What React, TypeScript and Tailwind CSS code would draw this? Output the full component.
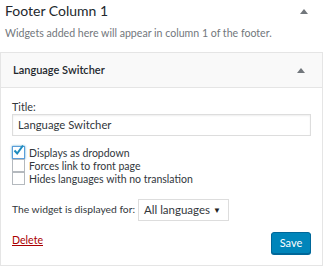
const font = { fontFamily: 'Lato, "Open Sans", sans-serif' };

function Caret() {
  return (
    <svg width="8" height="5" viewBox="0 0 8 5" className="shrink-0">
      <path d="M0 5 L4 0 L8 5 Z" fill="#72777c" />
    </svg>
  );
}

function Check({ checked, label }: { checked?: boolean; label: string }) {
  return (
    <label className="flex h-[13px] items-center gap-[4px]">
      <span
        className={
          "relative flex h-[13px] w-[13px] shrink-0 items-center justify-center border bg-white " +
          (checked ? "border-[#5b9dd9] shadow-[0_0_2px_rgba(30,140,190,0.8)]" : "border-[#b4b9be]")
        }
      >
        {checked && (
          <svg width="13" height="13" viewBox="0 0 13 13" className="absolute -left-[1px] -top-[3px]">
            <path d="M2.5 6.5 L5.2 9.5 L11 1.5" stroke="#1e8cbe" strokeWidth="2" fill="none" />
          </svg>
        )}
      </span>
      <span className="whitespace-nowrap text-[10.5px] leading-[12px] text-[#32373c]">{label}</span>
    </label>
  );
}

export default function App() {
  return (
    <div className="h-[274px] w-[326px] bg-white" style={font}>
      <div className="flex h-[22px] items-center justify-between pl-[5px] pr-[18px]">
        <h2 className="text-[14px] leading-[18px] text-[#23282d]">Footer Column 1</h2>
        <Caret />
      </div>
      <p className="mt-[4px] whitespace-nowrap pl-[5px] text-[10.6px] leading-[14px] text-[#72777c]">
        Widgets added here will appear in column 1 of the footer.
      </p>
      <div className="mt-[12px] w-[323px] border border-[#e5e5e5] bg-white">
        <div className="flex h-[35px] items-center justify-between border-b border-[#e5e5e5] bg-[#f9f9f9] pl-[12px] pr-[17px]">
          <span className="text-[11px] font-semibold text-[#23282d]">Language Switcher</span>
          <Caret />
        </div>
        <div className="px-[11px] pb-[11px] pt-[12px]">
          <div className="text-[10.8px] leading-[14px] text-[#32373c]">Title:</div>
          <div className="flex h-[22px] w-[299px] items-center border border-[#ddd] px-[5px] text-[11.3px] text-[#32373c] shadow-[inset_0_1px_2px_rgba(0,0,0,0.07)]">
            Language Switcher
          </div>
          <div className="mt-[10px] flex flex-col">
            <Check checked label="Displays as dropdown" />
            <Check label="Forces link to front page" />
            <Check label="Hides languages with no translation" />
          </div>
          <div className="mt-[14px] flex items-center gap-[3px]">
            <span className="whitespace-nowrap text-[10.3px] text-[#32373c]">The widget is displayed for:</span>
            <div className="flex h-[22px] w-[91px] items-center justify-between border border-[#ddd] pl-[5px] pr-[7px] text-[11.5px] text-[#32373c]">
              <span className="whitespace-nowrap">All languages</span>
              <span className="text-[8px] text-[#222]">▼</span>
            </div>
          </div>
          <div className="mt-[11px] flex items-start justify-between">
            <a className="mt-[1px] text-[10.6px] leading-[14px] text-[#a00] underline">Delete</a>
            <button className="flex h-[22px] w-[40px] items-center justify-center rounded-[3px] border border-[#006799] bg-[#0085ba] text-[11px] text-white shadow-[0_1px_0_#006799]">
              Save
            </button>
          </div>
        </div>
      </div>
    </div>
  );
}
